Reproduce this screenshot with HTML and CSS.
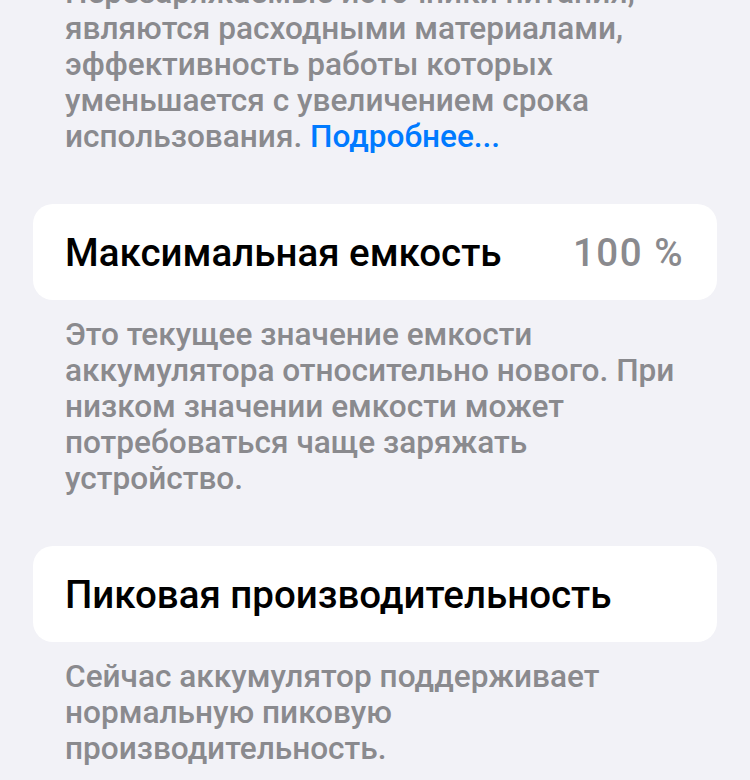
FILE: index.html
```html
<!DOCTYPE html>
<html lang="ru">
<head>
    <meta charset="UTF-8">
    <title>Состояние аккумулятора</title>
    <link rel="stylesheet" href="styles.css">
</head>
<body>
    <div class="page">
        <p class="footer">
            Перезаряжаемые источники питания, являются расходными материалами, эффективность работы которых уменьшается с увеличением срока использования. <a href="#" class="link">Подробнее...</a>
        </p>

        <div class="group">
            <div class="cell">
                <span class="cell-title">Максимальная емкость</span>
                <span class="cell-value">100 %</span>
            </div>
        </div>
        <p class="footer footer-after">
            Это текущее значение емкости аккумулятора относительно нового. При низком значении емкости может потребоваться чаще заряжать устройство.
        </p>

        <div class="group">
            <div class="cell">
                <span class="cell-title">Пиковая производительность</span>
            </div>
        </div>
        <p class="footer footer-after">
            Сейчас аккумулятор поддерживает нормальную пиковую производительность.
        </p>
    </div>
</body>
</html>
```

FILE: styles.css
```css
html, body {
    margin: 0;
    background-color: #f2f2f7;
}
body {
    font-family: Roboto, "Noto Sans", sans-serif;
    -webkit-font-smoothing: antialiased;
}
.page {
    margin-top: -25px;
    padding: 0 33px;
}
.footer {
    margin: 0;
    padding: 0 32px;
    font-size: 31.6px;
    font-weight: 500;
    line-height: 36px;
    color: #8a8a8e;
}
.footer-after {
    margin-top: 17px;
}
.link {
    color: #007aff;
    text-decoration: none;
}
.group {
    margin-top: 49px;
    background-color: #fff;
    border-radius: 20px;
}
.cell {
    display: flex;
    align-items: center;
    justify-content: space-between;
    height: 96px;
    padding: 0 33px 0 32px;
    font-size: 38.5px;
    font-weight: 500;
}
.cell-title {
    color: #000;
}
.cell-value {
    color: #8a8a8e;
    letter-spacing: 1.5px;
}
```
